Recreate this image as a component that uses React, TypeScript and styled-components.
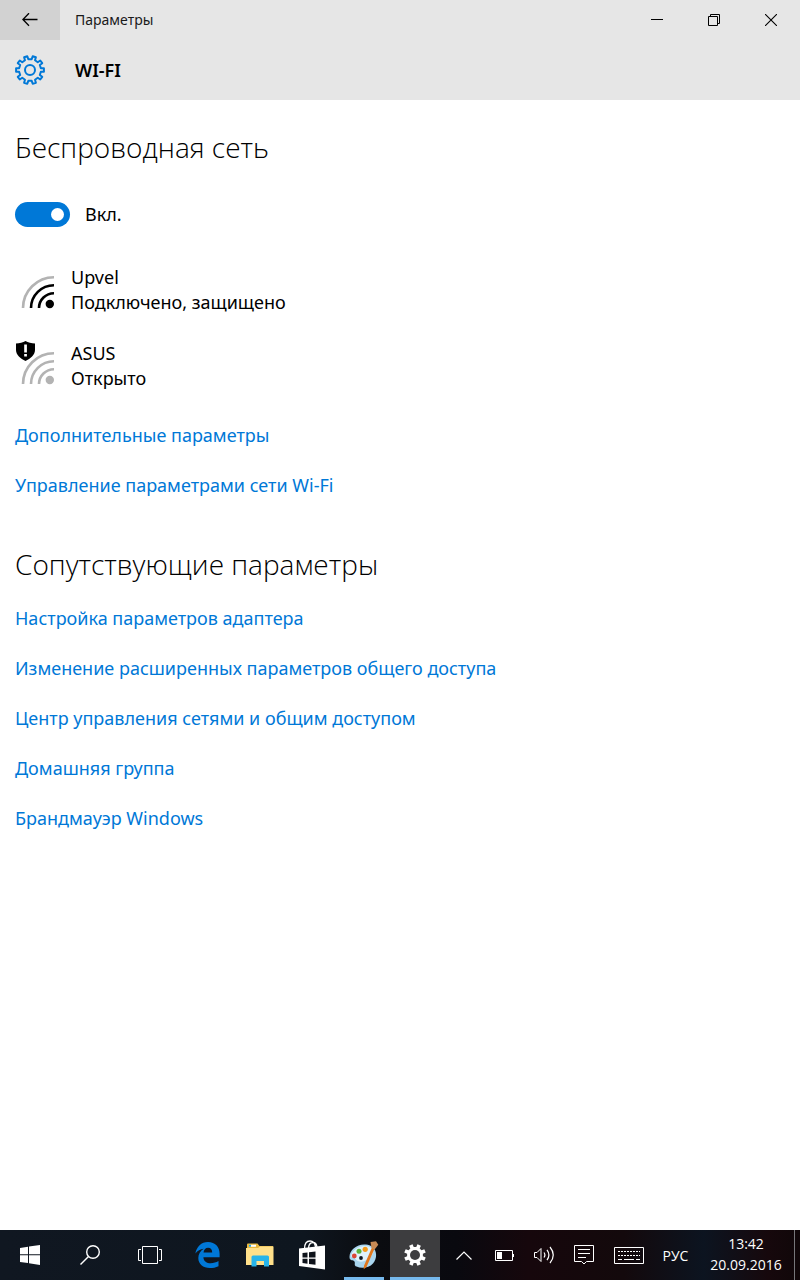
import React from "react";
import styled, { createGlobalStyle } from "styled-components";

const GlobalStyle = createGlobalStyle`
  * { box-sizing: border-box; }
  body { margin: 0; background: #fff; color: #000; font-family: "Noto Sans", "Open Sans", sans-serif; }
  button { font: inherit; color: inherit; border: 0; padding: 0; background: transparent; cursor: pointer; }
  h1, h2, ul { margin: 0; padding: 0; font-weight: 400; }
  ul { list-style: none; }
  svg { display: block; flex: none; }
`;

const Screen = styled.div`
  min-height: 100vh;
  display: flex;
  flex-direction: column;
`;

const TitleBar = styled.header`
  display: flex;
  height: 40px;
  padding-right: 1px;
  background: #e6e6e6;
`;

const BackButton = styled.button`
  width: 60px;
  background: #d2d2d2;
  display: flex;
  align-items: center;
  justify-content: center;
`;

const WindowTitle = styled.span`
  flex: 1;
  padding-left: 15px;
  font-size: 14px;
  line-height: 40px;
  color: #1a1a1a;
`;

const CaptionButton = styled.button`
  width: 57px;
  display: flex;
  align-items: center;
  justify-content: center;
`;

const PageHeader = styled.div`
  display: flex;
  align-items: center;
  gap: 30px;
  height: 60px;
  padding: 0 15px;
  background: #e6e6e6;
`;

const PageTitle = styled.h1`
  && { font-weight: 600; }
  font-size: 18px;
  line-height: 24px;
`;

const Content = styled.main`
  flex: 1;
  padding: 27px 15px;
`;

const SectionTitle = styled.h2`
  && { font-weight: 300; }
  font-family: "Open Sans", "Noto Sans", sans-serif;
  font-size: 28px;
  line-height: 40px;
`;

const ToggleRow = styled.label`
  display: flex;
  align-items: center;
  gap: 15px;
  width: max-content;
  margin-top: 35px;
  font-size: 18px;
  line-height: 25px;
`;

const Toggle = styled.input`
  appearance: none;
  margin: 0;
  width: 55px;
  height: 25px;
  padding: 6px;
  border-radius: 13px;
  background: #999;
  display: flex;
  &:checked {
    justify-content: flex-end;
    background: #0078d7;
  }
  &::before {
    content: "";
    width: 13px;
    height: 13px;
    border-radius: 50%;
    background: #fff;
  }
`;

const Networks = styled.ul`
  display: flex;
  flex-direction: column;
  gap: 26px;
  margin-top: 38px;
`;

const NetworkButton = styled.button`
  display: flex;
  align-items: center;
  gap: 16px;
  text-align: left;
  font-size: 18px;
  line-height: 25px;
`;

const NetworkText = styled.span`
  display: flex;
  flex-direction: column;
`;

const Links = styled.ul<{ $top: number }>`
  display: flex;
  flex-direction: column;
  align-items: flex-start;
  gap: 25px;
  margin-top: ${(p) => p.$top}px;
`;

const Related = styled.section`
  margin-top: 46px;
`;

const Link = styled.a`
  display: block;
  font-size: 18px;
  line-height: 25px;
  color: #0078d7;
  text-decoration: none;
`;

const Taskbar = styled.footer`
  display: flex;
  justify-content: space-between;
  height: 50px;
  color: #fff;
  background: linear-gradient(90deg, #101721 0%, #0e161f 38%, #0b0c10 47%, #09090f 57%, #16070c 66%, #13090c 78%, #0c1420 88%, #16080c 96%, #100709 100%);
`;

const TaskGroup = styled.div`
  display: flex;
`;

const TaskButton = styled.button<{ $width: number; $active?: boolean }>`
  flex: none;
  width: ${(p) => p.$width}px;
  display: flex;
  align-items: center;
  justify-content: center;
  background: ${(p) => (p.$active ? "#3d3d3f" : "transparent")};
`;

const RunningButton = styled(TaskButton)`
  border: solid #76b9ed;
  border-width: 0 0 3px;
  padding-top: 3px;
`;

const PinnedApps = styled(TaskGroup)`
  padding-right: 6px;
`;

const Language = styled.button`
  width: 35px;
  font-size: 14px;
  font-family: "Open Sans", "Noto Sans", sans-serif;
`;

const Clock = styled.button`
  width: 102px;
  padding: 0 9px 2px 14px;
  border-right: 1px solid #77777a;
  margin-right: 5px;
  font-family: "Open Sans", "Noto Sans", sans-serif;
  font-size: 14px;
  line-height: 21px;
  text-align: center;
`;

function gearPath(c: number, teeth: number, outer: number, inner: number, tip: number, root: number) {
  const step = (Math.PI * 2) / teeth;
  const point = (r: number, a: number) =>
    `${(c + r * Math.sin(a)).toFixed(2)} ${(c - r * Math.cos(a)).toFixed(2)}`;
  const parts: string[] = [];
  for (let i = 0; i < teeth; i++) {
    const a = (i + 0.5) * step;
    parts.push(point(inner, a - root), point(outer, a - tip), point(outer, a + tip), point(inner, a + root));
  }
  return `M${parts.join("L")}Z`;
}

const BackIcon = () => (
  <svg width="16" height="14" viewBox="0 0 16 14" fill="none" stroke="#000" strokeWidth="1.3">
    <path d="M15.5 6.500H1M7 .2L.9 6.500 7 12.800" />
  </svg>
);

const MinimizeIcon = () => (
  <svg width="12" height="12" viewBox="0 0 12 12"><path d="M0 5h12v1H0z" /></svg>
);

const RestoreIcon = () => (
  <svg width="12" height="12" viewBox="0 0 12 12" fill="none" stroke="#000">
    <path d="M.5 2.5h9v9h-9zM2.5 2.5v-2h9v9h-2" />
  </svg>
);

const CloseIcon = () => (
  <svg width="12" height="12" viewBox="0 0 12 12" stroke="#000" strokeWidth="1.1"><path d="M0 0l12 12M12 0L0 12" /></svg>
);

const SettingsIcon = () => (
  <svg width="30" height="30" viewBox="0 0 30 30" fill="none" stroke="#0078d7" strokeWidth="2" strokeLinejoin="round">
    <path d={gearPath(15, 10, 14, 11, 0.12, 0.16)} />
    <circle cx="15" cy="15" r="5" />
  </svg>
);

const WifiIcon = ({ strong, open }: { strong?: boolean; open?: boolean }) => {
  const near = strong ? "#000" : "#b3b3b3";
  return (
    <svg width="40" height="50" viewBox="0 0 40 50" fill="none" strokeWidth="2.6">
      <path d="M8 43A31 31 0 0 1 39 12.200" stroke="#b3b3b3" />
      <path d="M16 43A23 23 0 0 1 39 20.200" stroke={near} />
      <path d="M24 43A15 15 0 0 1 39 28.200" stroke={near} />
      <circle cx="34.800" cy="39" r="4.200" fill={near} />
      {open && (
        <>
          <path d="M10.500 0C8 1.600 4.500 2.400 1 2.400V9c0 5 4.600 8.700 9.500 11C15.400 17.700 20 14 20 9V2.400C16.500 2.400 13 1.600 10.500 0Z" fill="#000" />
          <path d="M9.200 3.500h2.700v8H9.200zM9.200 13h2.700v2.600H9.200z" fill="#fff" />
        </>
      )}
    </svg>
  );
};

const StartIcon = () => (
  <svg width="20" height="20" viewBox="0 0 20 20" fill="#fff">
    <path d="M0 2.900L8 1.800v7.500H0zM9 1.600L20 0v9.300H9zM0 10.300h8v7.800L0 17zM9 10.300h11V20L9 18.300z" />
  </svg>
);

const SearchIcon = () => (
  <svg width="20" height="20" viewBox="0 0 20 20" fill="none" stroke="#fff" strokeWidth="1.4">
    <circle cx="13" cy="7" r="6.300" /><path d="M8.500 11.500L.5 19.500" />
  </svg>
);

const TaskViewIcon = () => (
  <svg width="24" height="18" viewBox="0 0 24 18" fill="none" stroke="#fff">
    <path d="M4.500 .5h15v17h-15zM3 3.500H.5v11H3M21 3.500h2.500v11H21" />
  </svg>
);

const EdgeIcon = () => (
  <svg width="25" height="26" viewBox="0 0 25 26" fill="#0078d7">
    <path d="M.4 11.500C1.500 4.800 6.300 0 13 0c7.200 0 11.600 5 11.600 11.800v3.400H8.400c.2 4.200 3.400 6 7.300 6 2.900 0 5.500-.8 7.800-2.200v5.200C20.800 25.500 18 26 14.800 26 8 26 3.300 22 3.300 16c0-3.800 2-7.200 5.400-9.200C5.300 7.300 2.600 8.700.4 11.500ZM8.500 10.500h8.700c0-3-1.500-4.800-4.100-4.800-2.500 0-4.200 2-4.600 4.800Z" />
  </svg>
);

const ExplorerIcon = () => (
  <svg width="28" height="24" viewBox="0 0 28 24">
    <path d="M1 1.500Q1 .5 2 .5h9.500l2 2.500H27v19H1z" fill="#e9b93f" />
    <path d="M3 1.800h7v2H3z" fill="#fff" /><path d="M3 1.800h2v2H3z" fill="#28a8e0" />
    <path d="M0 5h12l2-1.500h13.500V22H0z" fill="#ffe08a" />
    <path d="M5.500 23.500V14q0-1.500 1.500-1.500h14.500q1.500 0 1.500 1.500v9.500h-5V18h-7.500v5.500z" fill="#27b4ea" />
  </svg>
);

const StoreIcon = () => (
  <svg width="26" height="30" viewBox="0 0 26 30">
    <path d="M5.500 9C5.500 4 7.500 1 11 1c3 0 5 2.500 5.500 6M9.500 8c.3-3.500 2-5.500 4.500-5.500S17.500 4 18 7" fill="none" stroke="#fff" strokeWidth="1.300" />
    <path d="M0 8.500L26 5.500V29.500L0 26z" fill="#fff" />
    <path d="M3.500 13l5-.6v5h-5zM10 12.200l6.500-.8v6H10zM3.500 18.700h5v5l-5-.6zM10 18.700h6.500v6.100l-6.500-.8z" fill="#0e131b" />
  </svg>
);

const PaintIcon = () => (
  <svg width="30" height="29" viewBox="0 0 30 29">
    <path d="M17 3.500C8.500 2.500 .5 8.500 .5 16c0 4.500 4 2.500 5 4.500s-1 4 2 5.100c5 2.200 12.500 1.400 16.500-3.100 4.500-5 4-13-.5-16.500-2-1.600-4-2.200-6.500-2.500Z" fill="#a9d5ee" />
    <path d="M16.500 5C9 5 2.500 10 2 15.500c1 1 3 .5 4.500 2.500C10 23 20 21 24.500 11c0-3-4-6-8-6Z" fill="#dff2fb" />
    <circle cx="12" cy="17" r="1.900" fill="#111820" />
    <circle cx="5.300" cy="15" r="2.400" fill="#db4537" />
    <circle cx="10" cy="10.300" r="2.500" fill="#5bb33c" />
    <circle cx="16.200" cy="8.300" r="2.600" fill="#f49b1b" />
    <path d="M23 6.500l2.500 1.200L17.500 26l-2.800 2.200.3-3.400z" fill="#e0771d" />
    <path d="M21.500 1L27 .3l2.300 3.500L25.800 8.300 22.500 7z" fill="#c78a55" />
  </svg>
);

const TaskGearIcon = () => (
  <svg width="22" height="22" viewBox="0 0 22 22" fill="none">
    <path d={gearPath(11, 8, 11, 8, 0.17, 0.23)} fill="#fff" />
    <circle cx="11" cy="11" r="5" fill="#3d3d3f" />
  </svg>
);

const ChevronIcon = () => (
  <svg width="16" height="9" viewBox="0 0 16 9" fill="none" stroke="#fff" strokeWidth="1.200"><path d="M.5 8.500L8 1l7.500 7.500" /></svg>
);

const BatteryIcon = () => (
  <svg width="19" height="11" viewBox="0 0 19 11">
    <path d="M.5 .5h17v10H.5z" fill="none" stroke="#fff" /><path d="M2 2h5v7H2zM18 4h1v3h-1z" fill="#fff" />
  </svg>
);

const VolumeIcon = () => (
  <svg width="21" height="18" viewBox="0 0 21 18" fill="none" stroke="#fff">
    <path d="M.5 6.500H3l4-4v13l-4-4H.5z" />
    <path d="M10 6.500q1.800 2.500 0 5M13 3.800q3.800 5.200 0 10.400M16 1q6.500 8 0 16" strokeWidth="1.200" />
  </svg>
);

const NotificationIcon = () => (
  <svg width="20" height="20" viewBox="0 0 20 20" fill="none" stroke="#fff">
    <path d="M.5 .5h19v16h-7L10 19l-2.500-2.500h-7zM4 4.500h12M4 8.500h12M4 12.500h8" />
  </svg>
);

const KeyboardIcon = () => (
  <svg width="30" height="17" viewBox="0 0 30 17" fill="none" stroke="#fff">
    <path d="M.5 .5h29v16H.5z" />
    <path d="M4 4.500h22M4 8.500h22" strokeDasharray="2 1" />
    <path d="M4 12.500h4M10 12.500h10M22 12.500h4" />
  </svg>
);

const related = [
  "Настройка параметров адаптера",
  "Изменение расширенных параметров общего доступа",
  "Центр управления сетями и общим доступом",
  "Домашняя группа",
  "Брандмауэр Windows",
];

export default function App() {
  return (
    <Screen>
      <GlobalStyle />
      <TitleBar>
        <BackButton aria-label="Назад"><BackIcon /></BackButton>
        <WindowTitle>Параметры</WindowTitle>
        <CaptionButton aria-label="Свернуть"><MinimizeIcon /></CaptionButton>
        <CaptionButton aria-label="Восстановить"><RestoreIcon /></CaptionButton>
        <CaptionButton aria-label="Закрыть"><CloseIcon /></CaptionButton>
      </TitleBar>
      <PageHeader>
        <SettingsIcon />
        <PageTitle>WI-FI</PageTitle>
      </PageHeader>
      <Content>
        <SectionTitle>Беспроводная сеть</SectionTitle>
        <ToggleRow>
          <Toggle type="checkbox" role="switch" defaultChecked />
          Вкл.
        </ToggleRow>
        <Networks>
          <li>
            <NetworkButton>
              <WifiIcon strong />
              <NetworkText><span>Upvel</span><span>Подключено, защищено</span></NetworkText>
            </NetworkButton>
          </li>
          <li>
            <NetworkButton>
              <WifiIcon open />
              <NetworkText><span>ASUS</span><span>Открыто</span></NetworkText>
            </NetworkButton>
          </li>
        </Networks>
        <Links $top={32}>
          <li><Link href="#advanced">Дополнительные параметры</Link></li>
          <li><Link href="#manage">Управление параметрами сети Wi-Fi</Link></li>
        </Links>
        <Related>
          <SectionTitle>Сопутствующие параметры</SectionTitle>
          <Links $top={22}>
            {related.map((text, i) => (
              <li key={text}><Link href={`#related-${i}`}>{text}</Link></li>
            ))}
          </Links>
        </Related>
      </Content>
      <Taskbar>
        <TaskGroup>
          <PinnedApps>
            <TaskButton $width={60} aria-label="Пуск"><StartIcon /></TaskButton>
            <TaskButton $width={60} aria-label="Поиск"><SearchIcon /></TaskButton>
            <TaskButton $width={60} aria-label="Представление задач"><TaskViewIcon /></TaskButton>
            <TaskButton $width={54} aria-label="Edge"><EdgeIcon /></TaskButton>
            <TaskButton $width={52} aria-label="Проводник"><ExplorerIcon /></TaskButton>
            <TaskButton $width={52} aria-label="Магазин"><StoreIcon /></TaskButton>
          </PinnedApps>
          <PinnedApps>
            <RunningButton $width={40} aria-label="Paint"><PaintIcon /></RunningButton>
          </PinnedApps>
          <RunningButton $width={50} $active aria-label="Параметры"><TaskGearIcon /></RunningButton>
        </TaskGroup>
        <TaskGroup>
          <TaskButton $width={48} aria-label="Скрытые значки"><ChevronIcon /></TaskButton>
          <TaskButton $width={32} aria-label="Батарея"><BatteryIcon /></TaskButton>
          <TaskButton $width={48} aria-label="Громкость"><VolumeIcon /></TaskButton>
          <TaskButton $width={32} aria-label="Уведомления"><NotificationIcon /></TaskButton>
          <TaskButton $width={58} aria-label="Клавиатура"><KeyboardIcon /></TaskButton>
          <Language>РУС</Language>
          <Clock>13:42<br />20.09.2016</Clock>
        </TaskGroup>
      </Taskbar>
    </Screen>
  );
}
